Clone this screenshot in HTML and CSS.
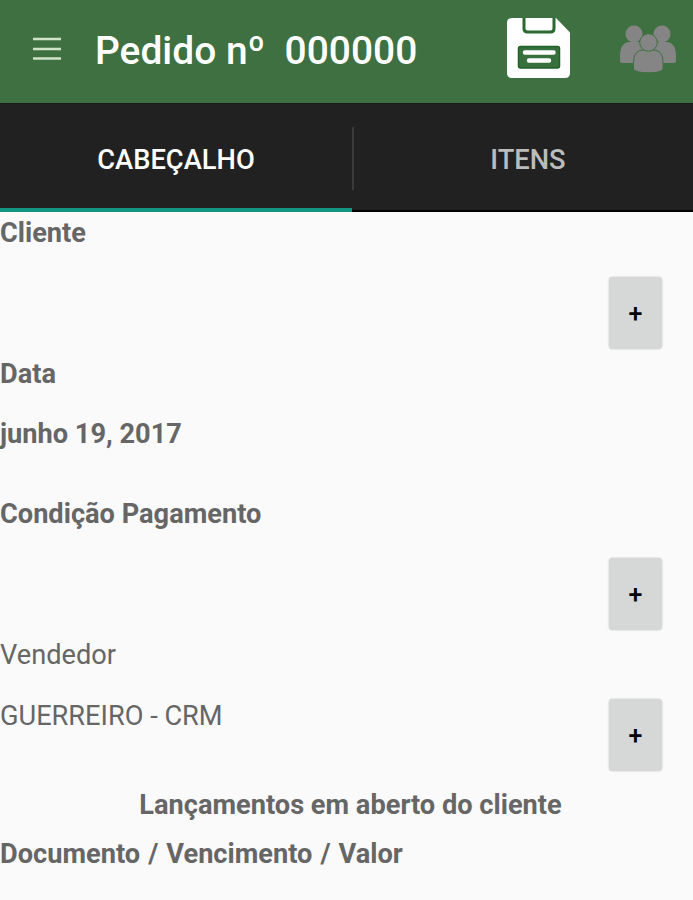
FILE: index.html
```html
<!DOCTYPE html>
<html lang="pt-BR">
<head>
    <meta charset="UTF-8">
    <meta name="viewport" content="width=device-width, initial-scale=1.0">
    <title>Pedido</title>
    <link rel="stylesheet" href="styles.css">
</head>
<body>

    <header class="toolbar">
        <svg class="menu-icon" viewBox="0 0 28 24">
            <path d="M0 2h28M0 12h28M0 21.5h28" stroke="#cfe3c8" stroke-width="2.4"/>
        </svg>
        <h1>Pedido nº&nbsp; 000000</h1>
        <svg class="save-icon" viewBox="0 0 63 60">
            <path fill="#fff" d="M5 0H49L63 14.500V55Q63 60 58 60H5Q0 60 0 55V5Q0 0 5 0Z"/>
            <path fill="none" stroke="#2a6930" stroke-width="3" d="M17 -1V10.500Q17 14 20.500 14H43.500Q47 14 47 10.500V-1"/>
            <rect x="11.500" y="28.500" width="41" height="21.500" rx="2" fill="#37703c" stroke="#1f6327" stroke-width="1.500"/>
            <path stroke="#fff" stroke-width="4.500" stroke-linecap="round" d="M18 34.500H46.500M22 42.500H42"/>
        </svg>
        <svg class="people-icon" viewBox="0 0 56 48">
            <g fill="#858585">
                <circle cx="14" cy="9" r="8.500"/>
                <circle cx="42" cy="9" r="8.500"/>
                <path d="M0 36V31Q0 18 9 17H19Q25 20 24 38H3Q0 38 0 36Z"/>
                <path d="M56 36V31Q56 18 47 17H37Q31 20 32 38H53Q56 38 56 36Z"/>
            </g>
            <g fill="#858585" stroke="#3f7042" stroke-width="1">
                <path d="M13.500 44V37Q13.500 25.500 23 25H34Q43 25.500 43 37V44Q41 47.800 28.500 47.800Q15 47.800 13.500 44Z"/>
                <circle cx="28.500" cy="17.500" r="8.800"/>
            </g>
        </svg>
    </header>

    <nav class="tabs">
        <a class="tab active">CABEÇALHO</a>
        <a class="tab">ITENS</a>
    </nav>

    <main>
        <section class="field">
            <h2>Cliente</h2>
            <div class="row">
                <button>+</button>
            </div>
        </section>
        <section class="field">
            <h2>Data</h2>
            <div class="row">
                <b>junho 19, 2017</b>
            </div>
        </section>
        <section class="field">
            <h2>Condição Pagamento</h2>
            <div class="row">
                <button>+</button>
            </div>
        </section>
        <section class="field">
            <h2 class="light">Vendedor</h2>
            <div class="row">
                <span>GUERREIRO - CRM</span>
                <button>+</button>
            </div>
        </section>

        <h2 class="list-title">Lançamentos em aberto do cliente</h2>
        <h2 class="list-head">Documento / Vencimento / Valor</h2>
    </main>

</body>
</html>
```
FILE: styles.css
```css
* {
    box-sizing: border-box;
}

body {
    margin: 0;
    height: 900px;
    overflow: hidden;
    background-color: #fafafa;
    font-family: Roboto, sans-serif;
    font-size: 27.2px;
    line-height: 34px;
    color: #666;
}

h1, h2 {
    margin: 0;
    font-size: inherit;
    font-weight: bold;
}

/* top bar */
.toolbar {
    display: flex;
    align-items: center;
    height: 103px;
    padding: 0 17px 6px 33px;
    background-color: #3f7042;
}

.toolbar h1 {
    flex: 1;
    margin-left: 34px;
    padding-top: 4px;
    font-size: 38.9px;
    font-weight: 500;
    line-height: 48px;
    color: #fff;
    white-space: nowrap;
}

.menu-icon {
    width: 28px;
    height: 24px;
}

.save-icon {
    width: 63px;
    height: 60px;
    margin: 0 50px 1px 0;
}

.people-icon {
    width: 56px;
    height: 48px;
}

/* tabs */
.tabs {
    display: flex;
    height: 109px;
    background-color: #212121;
    border-top: 1px solid #1b1b1b;
}

.tab {
    position: relative;
    flex: 1;
    display: flex;
    align-items: center;
    justify-content: center;
    padding: 5px 0 0 11px;
    border-bottom: 2px solid #000;
    font-size: 27.3px;
    font-weight: 500;
    color: #bcbcbc;
}

.tab.active {
    flex: 0 0 352px;
    padding: 7px 0 0;
    border-bottom: 4px solid #149483;
    color: #fff;
}

.tab.active::after {
    content: "";
    position: absolute;
    right: -2px;
    top: 23px;
    width: 2px;
    height: 63px;
    background-color: #3a3a3a;
}

/* form */
main {
    padding-top: 4px;
}

.field {
    height: 140.7px;
}

.row {
    display: flex;
    align-items: flex-start;
    padding: 27px 31px 0 0;
}

.row b {
    margin-top: -1px;
}

.light {
    font-weight: 400;
}

button {
    width: 53px;
    height: 72px;
    margin-left: auto;
    padding: 0;
    border: 0;
    border-radius: 4px;
    background-color: #d6d8d7;
    box-shadow: 0 0 2px rgba(0, 0, 0, 0.25);
    font-family: inherit;
    font-size: 25px;
    font-weight: 500;
    color: #000;
}

.list-title {
    margin: 9px 0 15px;
    padding-left: 8px;
    text-align: center;
}

.list-head {
    word-spacing: 1.3px;
}
```
